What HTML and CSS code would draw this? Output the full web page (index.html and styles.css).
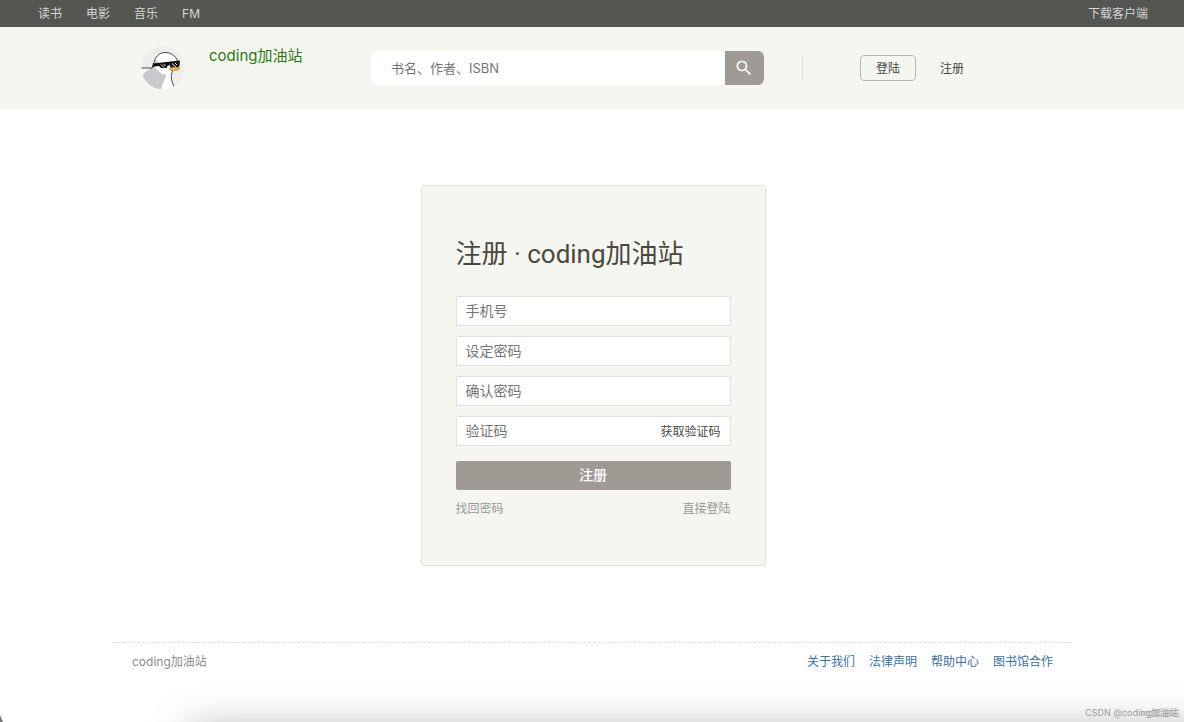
FILE: index.html
```html
<!DOCTYPE html>
<html lang="zh-CN">
<head>
<meta charset="utf-8">
<title>注册 · coding加油站</title>
<link rel="stylesheet" href="styles.css">
</head>
<body>
<nav class="topbar">
  <div class="topbar-links">
    <a href="#">读书</a>
    <a href="#">电影</a>
    <a href="#">音乐</a>
    <a href="#">FM</a>
  </div>
  <a href="#">下载客户端</a>
</nav>
<header class="header">
  <div class="header-inner">
    <a class="brand" href="#">
      <svg class="brand-avatar" viewBox="0 0 44 44" aria-hidden="true">
        <defs><clipPath id="avatar-clip"><circle cx="22" cy="22" r="21.5"/></clipPath></defs>
        <g clip-path="url(#avatar-clip)">
          <rect width="44" height="44" fill="#eeefec"/>
          <path d="M0 22 L12 21 C13 12 17 7 23 6.500 C31 6 36 11 36.500 20 L37 25 L31 27 C30 31 31 37 34 44 L0 44Z" fill="#fff"/>
          <path d="M15 13 L18 18 L14 21 L12 20Z" fill="#c9c7ca"/>
          <path d="M1 29 C6 25 10 21 14 21 C16 25 20 28 25.500 29 C23 34 21 39 20 44 L4 44Z" fill="#cbc8cb"/>
          <path d="M0 22 L11 22 M12.500 18 C14 11 18 6.500 24 6.500 C30 6.500 35 10 36.500 15 M31.500 25 C29 31 31 37 33.500 41" fill="none" stroke="#444" stroke-width="1"/>
          <path d="M12 17.500 L39 14.500 L38.500 20 L36 22 L30 22 L28.500 19 L26.500 20 L25.500 22 L20 22 L18 20 L13 20.500 L10.500 22.500Z" fill="#111"/>
          <path d="M20 18.500 L23 21.500 M22.500 18 L24.500 20 M31 17.500 L35 21 M34 17 L36 19" stroke="#eee" stroke-width="1"/>
          <path d="M29 22 C32 20.500 36 21 38.500 22 C38 25 31 25.500 28.500 23.500Z" fill="#f3b63f" stroke="#6d5426" stroke-width=".5"/>
        </g>
      </svg>
      <span class="brand-name">coding加油站</span>
    </a>
    <form class="search" role="search">
      <input class="search-input" type="search" placeholder="书名、作者、ISBN" aria-label="搜索">
      <button class="search-button" type="submit" aria-label="搜索">
        <svg class="search-icon" viewBox="0 0 24 24" aria-hidden="true"><path fill="currentColor" d="M15.500 14h-.79l-.28-.27A6.471 6.471 0 0 0 16 9.500 6.500 6.500 0 1 0 9.500 16c1.610 0 3.090-.59 4.230-1.570l.27.28v.79l5 4.990L20.490 19l-4.990-5zm-6 0C7.010 14 5 11.990 5 9.500S7.010 5 9.500 5 14 7.010 14 9.500 11.990 14 9.500 14z"/></svg>
      </button>
    </form>
    <div class="account">
      <button class="login" type="button">登陆</button>
      <a class="register" href="#">注册</a>
    </div>
  </div>
</header>
<main class="main">
  <form class="card">
    <h1 class="card-title">注册 · coding加油站</h1>
    <div class="fields">
      <input class="field" type="tel" placeholder="手机号" aria-label="手机号">
      <input class="field" type="password" placeholder="设定密码" aria-label="设定密码">
      <input class="field" type="password" placeholder="确认密码" aria-label="确认密码">
      <div class="field field-group">
        <input class="field-code" type="text" placeholder="验证码" aria-label="验证码">
        <button class="code-button" type="button">获取验证码</button>
      </div>
    </div>
    <button class="submit" type="submit">注册</button>
    <div class="card-links">
      <a href="#">找回密码</a>
      <a href="#">直接登陆</a>
    </div>
  </form>
</main>
<footer class="footer">
  <span>coding加油站</span>
  <div class="footer-links">
    <a href="#">关于我们</a>
    <a href="#">法律声明</a>
    <a href="#">帮助中心</a>
    <a href="#">图书馆合作</a>
  </div>
</footer>
<div class="edge" aria-hidden="true"><div class="edge-shadow"></div><div class="edge-corner"></div></div>
<div class="watermark">CSDN @cod<span class="watermark-echo">ing加油站</span></div>
</body>
</html>
```
FILE: styles.css
```css
* { box-sizing: border-box; }

body {
  position: relative;
  min-height: 100vh;
  margin: 0;
  overflow-x: hidden;
  background: #fff;
  color: #494949;
  font-family: Inter, "Noto Sans CJK SC", sans-serif;
  font-size: 12px;
  line-height: 18px;
}

a { color: inherit; text-decoration: none; }

button, input { margin: 0; padding: 0; border: 0; font: inherit; color: inherit; }
button { background: none; cursor: pointer; }
input { min-width: 0; outline: 0; appearance: none; }
input::placeholder { color: #757575; opacity: 1; }

.topbar {
  display: flex;
  align-items: center;
  justify-content: space-between;
  height: 27px;
  padding: 1px 36px 0 38px;
  background: #545652;
  color: #d5d5d5;
}

.topbar-links { display: flex; gap: 24px; }

.header { background: #f5f6f0; }

.header-inner {
  display: flex;
  align-items: center;
  max-width: 960px;
  height: 82px;
  margin: 0 auto;
  padding: 0 108px 0 29px;
}

.brand {
  display: flex;
  gap: 24px;
  width: 230px;
  color: #2a7a12;
}

.brand-avatar { width: 44px; height: 44px; }
.brand-name { font-size: 15px; line-height: 20px; }

.search { display: flex; flex: 1; height: 34px; }

.search-input {
  flex: 1;
  padding: 0 20px;
  border-radius: 6px 0 0 6px;
  background: #fff;
  font-size: 13px;
}

.search-button {
  display: grid;
  place-items: center;
  width: 39px;
  border-radius: 0 6px 6px 0;
  background: #9f9b94;
  color: #fff;
}

.search-icon { width: 20px; height: 20px; }

.account {
  display: flex;
  align-items: center;
  gap: 24px;
  margin-left: 38px;
  padding-left: 57px;
  border-left: 1px solid #dedfda;
}

.login {
  width: 56px;
  height: 26px;
  padding-top: 1px;
  border: 1px solid #b5b5b3;
  border-radius: 4px;
}

.register { padding-top: 1px; }

.main { padding: 76px 16px 76px 18px; }

.card {
  max-width: 345px;
  margin: 0 auto;
  padding: 48px 34px 47px;
  border: 1px solid #e2e3df;
  border-radius: 3px;
  background: #f5f6f0;
}

.card-title {
  margin: 0 0 22px;
  color: #494940;
  font-family: Roboto, "Noto Sans CJK SC", sans-serif;
  font-size: 26px;
  font-weight: 400;
  line-height: 40px;
}

.fields { display: grid; gap: 10px; }

.field {
  width: 100%;
  height: 30px;
  padding: 0 9px 1px;
  border: 1px solid #dfdfdf;
  border-radius: 2px;
  background: #fff;
  font-size: 14px;
}

.field-group { display: flex; align-items: center; justify-content: space-between; padding-bottom: 0; }
.field-code { flex: 1; }
.code-button { padding-top: 2px; font-size: 12px; }

.submit {
  width: 100%;
  height: 29px;
  margin: 15px 0 10px;
  padding-bottom: 1px;
  border-radius: 2px;
  background: #9f9b94;
  color: #fff;
  font-size: 14px;
  font-weight: 500;
}

.card-links { display: flex; justify-content: space-between; color: #999; }

.footer {
  display: flex;
  justify-content: space-between;
  max-width: 960px;
  margin: 0 auto;
  padding: 10px 19px 48px 20px;
  border-top: 1px dashed #ddd;
  color: #8d8d8d;
}

.footer-links { display: flex; gap: 14px; color: #3671a8; }

.edge {
  position: absolute;
  right: 0;
  bottom: 0;
  left: 0;
  height: 48px;
  overflow: hidden;
  pointer-events: none;
}

.edge-shadow {
  position: absolute;
  top: 58px;
  right: -60px;
  left: 190px;
  height: 60px;
  box-shadow: 0 0 44px rgba(0, 0, 0, .36);
}

.edge-corner {
  position: absolute;
  bottom: 0;
  left: 0;
  width: 3px;
  height: 7px;
  background: #777;
  clip-path: polygon(0 0, 100% 100%, 0 100%);
}

.watermark {
  position: absolute;
  right: 6px;
  bottom: 2px;
  color: #9b9b9b;
  font-size: 9px;
  line-height: 14px;
}

.watermark-echo { text-shadow: 2px 0 0 #c0c0c0; }
```
